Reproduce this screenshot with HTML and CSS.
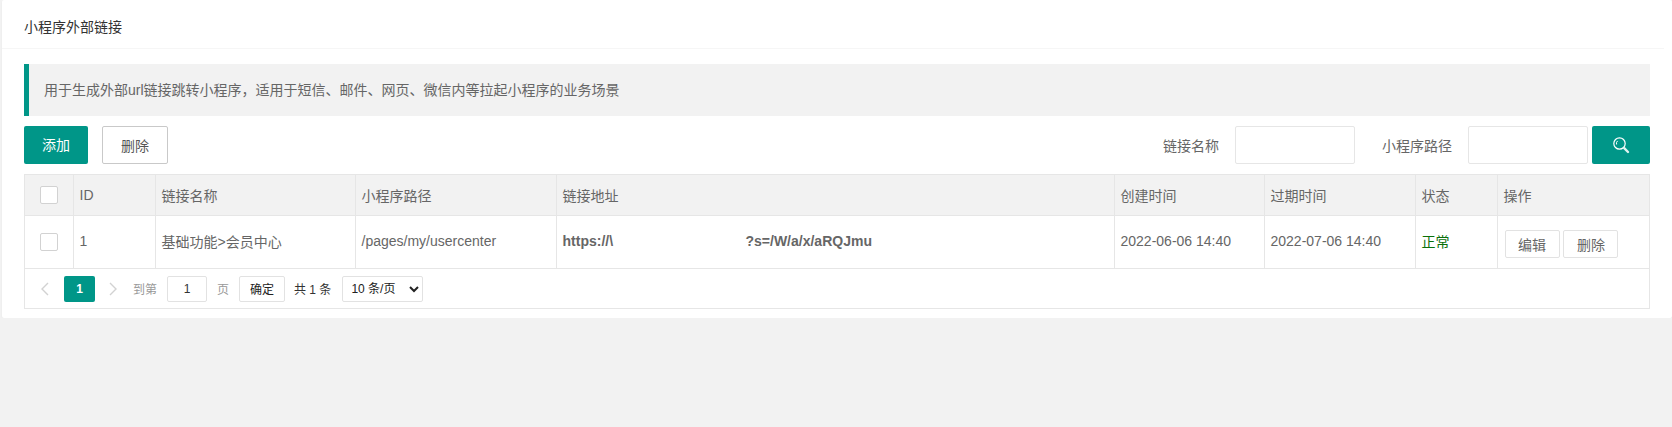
FILE: index.html
```html
<!DOCTYPE html>
<html lang="zh-CN">
<head>
  <meta charset="UTF-8">
  <title>小程序外部链接</title>
  <link rel="stylesheet" href="styles.css">
</head>
<body>

  <div class="card">
    <div class="card-header">小程序外部链接</div>
    <div class="card-body">
      <div class="notice">用于生成外部url链接跳转小程序，适用于短信、邮件、网页、微信内等拉起小程序的业务场景</div>

      <div class="toolbar">
        <button class="btn btn-primary btn-add">添加</button>
        <button class="btn btn-plain">删除</button>
        <div class="search">
          <label class="search-label">链接名称</label>
          <input type="text" class="search-input">
          <label class="search-label search-label-wide">小程序路径</label>
          <input type="text" class="search-input">
          <button class="btn btn-primary btn-search" aria-label="搜索">
            <svg width="18" height="18" viewBox="0 0 18 18" fill="none">
              <circle cx="7.5" cy="7.5" r="5.7" stroke="#fff" stroke-width="1.2"/>
              <path d="M4.6 8.5a3.4 3.4 0 0 1 1-3.6" stroke="#fff" stroke-width="1"/>
              <path d="M12.2 12.2l3.8 3.8" stroke="#dff3f0" stroke-width="2.4" stroke-linecap="round"/>
            </svg>
          </button>
        </div>
      </div>

      <div class="table-box">
        <table class="data-table">
          <colgroup>
            <col class="col-check">
            <col class="col-id">
            <col class="col-name">
            <col class="col-path">
            <col class="col-url">
            <col class="col-time">
            <col class="col-time2">
            <col class="col-status">
            <col>
          </colgroup>
          <thead>
            <tr>
              <th><span class="checkbox"></span></th>
              <th>ID</th>
              <th>链接名称</th>
              <th>小程序路径</th>
              <th>链接地址</th>
              <th>创建时间</th>
              <th>过期时间</th>
              <th>状态</th>
              <th>操作</th>
            </tr>
          </thead>
          <tbody>
            <tr>
              <td><span class="checkbox"></span></td>
              <td>1</td>
              <td>基础功能&gt;会员中心</td>
              <td>/pages/my/usercenter</td>
              <td class="url"><span class="url-head">https://\</span><span>?s=/W/a/x/aRQJmu</span></td>
              <td>2022-06-06 14:40</td>
              <td>2022-07-06 14:40</td>
              <td class="status">正常</td>
              <td class="actions">
                <button class="btn-row">编辑</button>
                <button class="btn-row">删除</button>
              </td>
            </tr>
          </tbody>
        </table>

        <div class="pager">
          <span class="pager-arrow">
            <svg width="12" height="16" viewBox="0 0 12 16" fill="none"><path d="M9 2L3 8l6 6" stroke="#d2d2d2" stroke-width="1.4"/></svg>
          </span>
          <span class="pager-current">1</span>
          <span class="pager-arrow pager-next">
            <svg width="12" height="16" viewBox="0 0 12 16" fill="none"><path d="M3 2l6 6-6 6" stroke="#d2d2d2" stroke-width="1.4"/></svg>
          </span>
          <span class="pager-text">到第</span>
          <input type="text" class="pager-input" value="1">
          <span class="pager-text pager-page">页</span>
          <button class="pager-ok">确定</button>
          <span class="pager-total">共 1 条</span>
          <select class="pager-size">
            <option>10 条/页</option>
          </select>
        </div>
      </div>
    </div>
  </div>

</body>
</html>
```

FILE: styles.css
```css
body {
  margin: 0;
  background: #f2f2f2;
  font-family: "Liberation Sans", "Noto Sans CJK SC", sans-serif;
  font-size: 14px;
  color: #666;
}

.card {
  margin-left: 2px;
  background: #fff;
  border-radius: 2px;
  box-shadow: 0 1px 2px rgba(0, 0, 0, 0.05);
}

.card-header {
  height: 48px;
  line-height: 55px;
  margin-right: 8px;
  padding-left: 22px;
  border-bottom: 1px solid #f6f6f6;
  font-size: 14px;
  color: #333;
}

.card-body {
  padding: 15px 22px 9px 22px;
}

.notice {
  height: 52px;
  line-height: 52px;
  padding-left: 15px;
  background: #f2f2f2;
  border-left: 5px solid #009688;
  font-size: 14px;
  color: #666;
}

.toolbar {
  display: flex;
  align-items: center;
  margin-top: 10px;
}

.btn {
  height: 38px;
  border-radius: 2px;
  font-family: inherit;
  font-size: 14px;
}

.btn-primary {
  width: 64px;
  background: #009688;
  border: none;
  color: #fff;
}

.btn-add {
  padding-bottom: 4px;
}

.btn-plain {
  width: 66px;
  margin-left: 14px;
  padding-bottom: 2px;
  background: #fff;
  border: 1px solid #c9c9c9;
  color: #555;
}

.search {
  display: flex;
  align-items: center;
  margin-left: auto;
}

.search-label {
  margin-right: 16px;
  color: #666;
}

.search-label-wide {
  margin-left: 27px;
}

.search-input {
  width: 120px;
  height: 38px;
  box-sizing: border-box;
  border: 1px solid #e6e6e6;
  border-radius: 2px;
  background: #fff;
}

.btn-search {
  width: 58px;
  margin-left: 4px;
  padding: 3px 0 0;
}

.table-box {
  margin-top: 10px;
  border: 1px solid #e6e6e6;
}

.data-table {
  width: 100%;
  border-collapse: collapse;
  table-layout: fixed;
}

.col-check { width: 48px; }
.col-id { width: 82px; }
.col-name { width: 200px; }
.col-path { width: 201px; }
.col-url { width: 558px; }
.col-time { width: 150px; }
.col-time2 { width: 151px; }
.col-status { width: 82px; }

.data-table th,
.data-table td {
  padding: 0 5px 0 6px;
  border: 1px solid #e6e6e6;
  text-align: left;
  font-weight: normal;
  white-space: nowrap;
}

.data-table tr > :first-child { border-left: none; }
.data-table tr > :last-child { border-right: none; }
.data-table thead th { border-top: none; }

.data-table th {
  height: 40px;
  background: #f2f2f2;
}

.data-table td {
  height: 53px;
  padding-bottom: 3px;
  box-sizing: border-box;
}

.data-table th:first-child,
.data-table td:first-child {
  padding: 0 0 0 15px;
}

.checkbox {
  display: block;
  width: 16px;
  height: 16px;
  background: #fff;
  border: 1px solid #d2d2d2;
  border-radius: 2px;
}

.url {
  font-weight: bold !important;
}

.url-head {
  display: inline-block;
  width: 183px;
}

.status {
  color: #0a700a;
}

.data-table .actions {
  padding: 4px 0 0 7px;
}

.btn-row {
  width: 55px;
  height: 28px;
  padding: 0;
  background: #fff;
  border: 1px solid #e2e2e2;
  border-radius: 2px;
  font-family: inherit;
  font-size: 14px;
  color: #666;
}

.pager {
  display: flex;
  align-items: center;
  height: 39px;
  padding-left: 14px;
  font-size: 12px;
}

.pager-arrow {
  display: flex;
  width: 12px;
}

.pager-current {
  width: 31px;
  height: 26px;
  margin-left: 13px;
  line-height: 26px;
  text-align: center;
  background: #009688;
  border-radius: 2px;
  color: #fff;
  font-weight: bold;
}

.pager-next {
  margin-left: 12px;
}

.pager-text {
  margin-left: 14px;
  color: #999;
}

.pager-input {
  width: 40px;
  height: 26px;
  box-sizing: border-box;
  margin-left: 10px;
  padding: 0;
  border: 1px solid #e2e2e2;
  border-radius: 2px;
  text-align: center;
  font-family: inherit;
  font-size: 12px;
  color: #333;
}

.pager-page {
  margin-left: 10px;
}

.pager-ok {
  width: 46px;
  height: 26px;
  margin-left: 10px;
  padding: 0;
  background: #fff;
  border: 1px solid #e2e2e2;
  border-radius: 2px;
  font-family: inherit;
  font-size: 12px;
  color: #222;
}

.pager-total {
  margin-left: 9px;
  color: #333;
}

.pager-size {
  width: 81px;
  height: 26px;
  margin-left: 11px;
  padding: 0 0 0 4px;
  background: #fff;
  border: 1px solid #e2e2e2;
  border-radius: 2px;
  font-family: inherit;
  font-size: 12px;
  color: #222;
}
```
